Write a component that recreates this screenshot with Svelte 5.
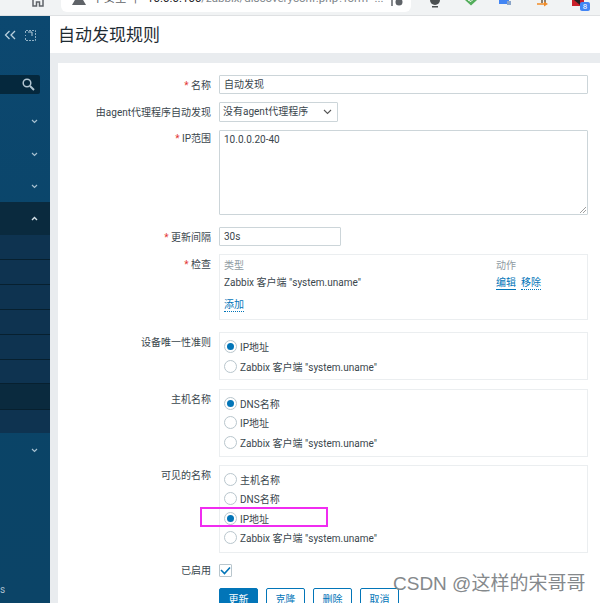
<script>
  const subs = [25, 25, 25, 25, 25, 24];
  const hostOpts = ['DNS名称', 'IP地址', 'Zabbix 客户端 "system.uname"'];
  const visOpts = ['主机名称', 'DNS名称', 'IP地址', 'Zabbix 客户端 "system.uname"'];
  const uniqOpts = ['IP地址', 'Zabbix 客户端 "system.uname"'];
</script>

<div class="page">
  <header class="browser">
    <svg class="home" width="14" height="8" viewBox="0 0 14 8"><path d="M2 0v6h3.500V2h3v4H12V0" fill="none" stroke="#5f6368" stroke-width="1.500"/></svg>
    <div class="omnibox">
      <svg class="warn" width="14" height="6" viewBox="0 0 14 6"><path d="M7-7 14 5H0z" fill="#5f6368"/></svg>
      <span class="insecure">不安全</span>
      <span class="sep">|</span>
      <span class="url"><b>10.0.0.100</b>/zabbix/discoveryconf.php?form=...</span>
      <svg class="key" width="14" height="8" viewBox="0 0 14 8"><path d="M2 0v6" stroke="#5f6368" stroke-width="1.500"/><circle cx="9" cy="2" r="3.500" fill="#5f6368"/></svg>
    </div>
    <div class="exts">
      <svg width="14" height="10" viewBox="0 0 14 10"><circle cx="6" cy="0" r="5" fill="#4a4f50"/><path d="M3 6h6v1.500H3z" fill="#4a4f50"/></svg>
      <svg width="14" height="10" viewBox="0 0 14 10"><path d="M1-3h12v3l-6 5.500L1 0z" fill="#53ad5b"/><path d="m4 0 3 1.500 3-3" stroke="#fff" fill="none"/></svg>
      <svg width="14" height="10" viewBox="0 0 14 10"><rect x="0" y="-4" width="10" height="8" fill="#4285f4"/><rect x="8" y="1" width="4" height="4" fill="#8aa4c8"/></svg>
      <svg class="orange" width="14" height="10" viewBox="0 0 14 10"><path d="M5-2v5M8-2v5" stroke="#6d5a40" stroke-width="1.500"/><path d="M0 4h7" stroke="#f28c28" stroke-width="1.500"/><path d="m7 1.500 4 2.500-4 2.500z" fill="#f28c28"/></svg>
      <div class="badged">
        <svg width="12" height="10" viewBox="0 0 12 10"><rect width="12" height="6" fill="#c9202a"/><path d="M2 0h6v5z" fill="#222"/></svg>
        <span class="badge">8</span>
      </div>
    </div>
  </header>

  <div class="app">
    <aside class="side">
      <div class="collapse">
        <svg width="13" height="10" viewBox="0 0 13 10"><path d="M5.500 1 1.500 5l4 4M11 1 7 5l4 4" fill="none" stroke="#b8cfdd" stroke-width="1.300"/></svg>
        <svg width="11" height="11" viewBox="0 0 11 11"><path d="M.5 3V.5h10v10H.5V8M.5 5v1" fill="none" stroke="#8fb0c5" stroke-dasharray="2 1"/><path d="M3 2h4v4" fill="none" stroke="#b8cfdd"/></svg>
      </div>
      <div class="search">
        <svg width="13" height="13" viewBox="0 0 13 13"><circle cx="5" cy="5" r="3.800" fill="none" stroke="#b4c6d2" stroke-width="1.500"/><path d="m8 8 4 4" stroke="#b4c6d2" stroke-width="2"/></svg>
      </div>
      <div class="menu">
        <div class="item first"><svg class="chev" viewBox="0 0 7 5"><path d="m1 1 2.500 2.500L6 1" /></svg></div>
        <div class="item"><svg class="chev" viewBox="0 0 7 5"><path d="m1 1 2.500 2.500L6 1" /></svg></div>
        <div class="item"><svg class="chev" viewBox="0 0 7 5"><path d="m1 1 2.500 2.500L6 1" /></svg></div>
        <div class="item open"><svg class="chev up" viewBox="0 0 7 5"><path d="M1 4 3.500 1.500 6 4" /></svg></div>
        {#each subs as h}
          <div class="sub" style="height: {h}px"></div>
        {/each}
        <div class="sub current"></div>
        <div class="sub last"></div>
        <div class="item first"><svg class="chev" viewBox="0 0 7 5"><path d="m1 1 2.500 2.500L6 1" /></svg></div>
      </div>
      <div class="side-foot">s</div>
    </aside>

    <main class="main">
      <div class="titlebar"><h1>自动发现规则</h1></div>
      <div class="gap"></div>
      <form class="card">
        <div class="row r-name">
          <div class="label"><i>*</i> 名称</div>
          <div class="input wide">自动发现</div>
        </div>
        <div class="row r-agent">
          <div class="label">由agent代理程序自动发现</div>
          <div class="input select">没有agent代理程序
            <svg width="9" height="6" viewBox="0 0 9 6"><path d="m1 1 3.500 3.500L8 1" fill="none" stroke="#555" stroke-width="1.100"/></svg>
          </div>
        </div>
        <div class="row r-ip">
          <div class="label"><i>*</i> IP范围</div>
          <div class="input area">10.0.0.20-40
            <svg class="grip" width="7" height="7" viewBox="0 0 7 7"><path d="m7 1-6 6M7 4 4 7" stroke="#888" stroke-width=".8"/></svg>
          </div>
        </div>
        <div class="row r-int">
          <div class="label"><i>*</i> 更新间隔</div>
          <div class="input short">30s</div>
        </div>
        <div class="row r-check">
          <div class="label"><i>*</i> 检查</div>
          <div class="box checks">
            <div class="chk-row head"><span>类型</span><span class="act">动作</span></div>
            <div class="chk-row"><span>Zabbix 客户端 "system.uname"</span>
              <span class="act"><a class="hover">编辑</a><a>移除</a></span></div>
            <div class="chk-add"><a>添加</a></div>
          </div>
        </div>
        <div class="row r-uniq">
          <div class="label">设备唯一性准则</div>
          <div class="box radios">
            {#each uniqOpts as o, i}
              <div class="radio"><span class="dot" class:on={i === 0}></span>{o}</div>
            {/each}
          </div>
        </div>
        <div class="row r-host">
          <div class="label">主机名称</div>
          <div class="box radios">
            {#each hostOpts as o, i}
              <div class="radio"><span class="dot" class:on={i === 0}></span>{o}</div>
            {/each}
          </div>
        </div>
        <div class="row r-vis">
          <div class="label">可见的名称</div>
          <div class="box radios">
            {#each visOpts as o, i}
              <div class="radio"><span class="dot" class:on={i === 2}></span>{o}</div>
            {/each}
            <div class="pink"></div>
          </div>
        </div>
        <div class="row r-en">
          <div class="label">已启用</div>
          <div class="cb"><svg width="11" height="9" viewBox="0 0 11 9"><path d="m1 4 3.500 3.500L10 1.500" fill="none" stroke="#0275b8" stroke-width="1.600"/></svg></div>
        </div>
        <div class="row r-btn">
          <div class="label"></div>
          <div class="btns">
            <span class="btn primary">更新</span>
            <span class="btn">克隆</span>
            <span class="btn">删除</span>
            <span class="btn">取消</span>
          </div>
        </div>
      </form>
    </main>
  </div>
  <div class="watermark">CSDN @这样的宋哥哥</div>
</div>

<style>
  :global(body) { margin: 0; background: #fff; }
  .page {
    width: 600px; height: 603px; overflow: hidden; position: relative;
    font-family: "Roboto", "Noto Sans CJK SC", sans-serif;
    font-size: 10px; color: #3a464d;
  }
  .browser {
    height: 16px; background: #f1f3f4; display: flex; border-bottom: 1px solid #dfe1e3;
    box-sizing: border-box; position: relative; overflow: hidden;
  }
  .home { position: absolute; left: 31px; top: 0; }
  .omnibox {
    position: absolute; left: 61px; top: -10px; width: 350px; height: 22px; background: #fff;
    border-radius: 0 0 6px 6px; color: #5f6368;
    font-family: "Roboto", "Noto Sans CJK SC", sans-serif; font-size: 11.500px; line-height: 17px;
  }
  .warn { position: absolute; left: 11px; top: 10px; }
  .insecure { position: absolute; left: 31px; top: 0; color: #5f6368; }
  .sep { position: absolute; left: 73px; top: 0; color: #5f6368; }
  .url { position: absolute; left: 86px; top: 0; white-space: nowrap; color: #80868b; }
  .url b { font-weight: 400; color: #202124; }
  .key { position: absolute; left: 329px; top: 10px; }
  .exts { position: absolute; left: 429px; top: 0; display: flex; gap: 21px; }
  .orange { margin-left: 3px; }
  .badged { position: relative; }
  .badge {
    position: absolute; left: 8px; top: 2px; width: 10px; height: 9px; background: #4285f4; color: #fff;
    border-radius: 2px; font-size: 8px; line-height: 9px; text-align: center;
  }
  .exts svg { display: block; }

  .app { display: flex; height: 587px; overflow: hidden; }
  .side {
    width: 50px; flex: none; background: linear-gradient(#0c4870, #0a4467 60%, #0b4467);
    display: flex; flex-direction: column; position: relative;
  }
  .collapse { height: 59px; flex: none; box-sizing: border-box; display: flex; justify-content: flex-end; gap: 8px; padding: 14px 14px 0 0; align-items: flex-start; }
  .collapse svg { display: block; }
  .search {
    height: 19px; flex: none; width: 40px; background: #05283d; border-radius: 0 2px 2px 0;
    display: flex; align-items: center; justify-content: flex-end; padding-right: 5px; box-sizing: border-box;
  }
  .menu { margin-top: 10px; display: flex; flex-direction: column; }
  .item { height: 32px; flex: none; display: flex; align-items: center; justify-content: flex-end; padding-right: 12px; box-sizing: border-box; }
  .item.first { height: 34px; }
  .item.open { background: #0a2a3e; height: 33px; }
  .chev { width: 7px; height: 5px; }
  .chev path { fill: none; stroke: #a6c0d0; stroke-width: 1.200; }
  .chev.up path { stroke: #d5e0e7; stroke-width: 1.400; }
  .sub { background: #0e3350; border-bottom: 1px solid #07202f; box-sizing: border-box; flex: none; }
  .sub.current { height: 26px; background: #0a2a3e; }
  .sub.last { height: 23px; background: #0e3350; border-bottom: 0; }
  .side-foot { position: absolute; left: 0; top: 567px; font-size: 10px; color: #a9bfcd; line-height: 14px; }

  .main { flex: 1; min-width: 0; display: flex; flex-direction: column; }
  .titlebar { height: 37px; flex: none; background: #fff; display: flex; align-items: center; padding-left: 8px; box-sizing: border-box; }
  h1 { font-size: 17px; font-weight: 400; margin: 0; color: #1f2c33; line-height: 22px; }
  .gap { height: 10px; background: #e9ecef; flex: none; }
  .card {
    flex: none; margin-left: 8px; background: #fff; position: relative;
    box-shadow: -8px 0 0 #e9ecef; padding-top: 12px;
  }
  .row { display: flex; align-items: flex-start; }
  .label { width: 153px; flex: none; text-align: right; line-height: 19px; white-space: nowrap; padding-top: 1px; }
  .label i { color: #e33734; font-style: normal; }
  .input {
    margin-left: 8px; border: 1px solid #ccd5d9; box-sizing: border-box; padding: 0 4px;
    line-height: 18px; background: #fff; white-space: nowrap; border-radius: 1px; position: relative;
  }
  .wide { width: 369px; height: 19px; }
  .select { width: 119px; height: 20px; padding-left: 3px; display: flex; align-items: center; justify-content: space-between; }
  .select svg { margin-right: 1px; }
  .area { width: 369px; height: 85px; padding-top: 0; }
  .grip { position: absolute; right: 1px; bottom: 1px; }
  .short { width: 122px; height: 19px; }
  .r-name { height: 27px; }
  .r-agent { height: 28px; }
  .r-ip { height: 97px; }
  .r-ip .label { line-height: 18px; padding-top: 0; }
  .r-int { height: 27px; }
  .r-check { height: 78px; }
  .r-uniq { height: 57px; }
  .r-host { height: 76px; }
  .r-vis { height: 99px; }
  .r-en { height: 24px; }
  .r-en .label { line-height: 14px; padding-top: 0; }
  .r-btn { height: 20px; }
  .box {
    margin-left: 8px; width: 369px; box-sizing: border-box; border: 1px solid #ebeef0; position: relative;
  }
  .checks { height: 66px; padding: 3px 4px 0; }
  .chk-row { display: flex; height: 20px; line-height: 18px; position: relative; }
  .head { color: #8f9ba2; height: 16px; line-height: 16px; }
  .act { position: absolute; left: 272px; top: 0; white-space: nowrap; }
  .act a + a { margin-left: 5px; }
  a { color: #0275b8; border-bottom: 1px dotted #0275b8; line-height: 13px; display: inline-block; }
  a.hover { border-bottom: 1px solid #0275b8; }
  .chk-add { padding-top: 4px; line-height: 14px; }
  .radios { padding: 3.500px 4px 0; }
  .radio { display: flex; align-items: center; height: 19.500px; white-space: nowrap; }
  .r-uniq .radio { height: 20px; }
  .r-uniq .box { height: 48px; }
  .r-host .box { height: 68px; }
  .r-vis .box { height: 88px; }
  .dot {
    width: 13px; height: 13px; border: 1px solid #b9c6cd; border-radius: 50%; box-sizing: border-box;
    margin-right: 3px; position: relative; flex: none; background: #fff;
  }
  .dot.on::after {
    content: ""; position: absolute; left: 2px; top: 2px; width: 7px; height: 7px; border-radius: 50%; background: #0275b8;
  }
  .pink {
    position: absolute; left: -20px; top: 41px; width: 128px; height: 20px; box-sizing: border-box;
    border: 2px solid #f02cf0; pointer-events: none;
  }
  .cb {
    margin-left: 8px; width: 13px; height: 13px; border: 1px solid #b9c6cd; box-sizing: border-box;
    display: flex; align-items: center; justify-content: center; border-radius: 1px;
  }
  .btns { margin-left: 8px; display: flex; gap: 8px; }
  .btn {
    width: 39px; height: 22px; box-sizing: border-box; border: 1px solid #0275b8; color: #0275b8;
    text-align: center; line-height: 21px; border-radius: 2px; background: #fff;
  }
  .btn.primary { background: #0275b8; color: #fff; }
  .watermark {
    position: absolute; left: 393px; top: 571px; font-size: 19px; line-height: 26px; color: #85898c;
    font-family: "Liberation Sans", "Noto Sans CJK SC", sans-serif; white-space: nowrap;
  }
</style>
